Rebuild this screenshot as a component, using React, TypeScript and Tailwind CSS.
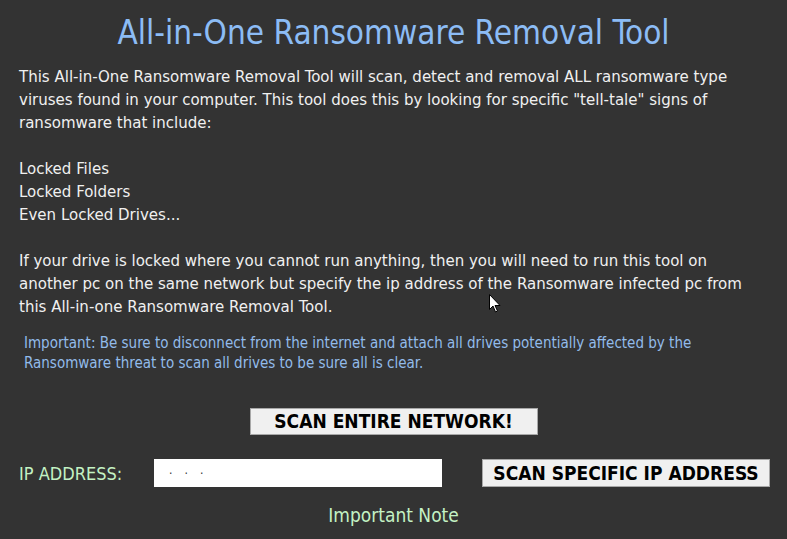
import React from "react";

const bodyLines = [
  "This All-in-One Ransomware Removal Tool will scan, detect and removal ALL ransomware type",
  'viruses found in your computer. This tool does this by looking for specific "tell-tale" signs of',
  "ransomware that include:",
  "",
  "Locked Files",
  "Locked Folders",
  "Even Locked Drives...",
  "",
  "If your drive is locked where you cannot run anything, then you will need to run this tool on",
  "another pc on the same network but specify the ip address of the Ransomware infected pc from",
  "this All-in-one Ransomware Removal Tool.",
];

function Cursor() {
  return (
    <svg className="absolute left-[489px] top-[294px]" width="13" height="20" viewBox="0 0 13 20">
      <path d="M0.5 0.5 L0.5 15.5 L4 12 L6.5 18 L8.5 17 L6 11.5 L11 11.5 Z" fill="#fff" stroke="#000" strokeWidth="1" />
    </svg>
  );
}

export default function App() {
  return (
    <div
      className="relative w-[787px] h-[539px] overflow-hidden bg-[#333333] px-[19px]"
      style={{ fontFamily: '"DejaVu Sans Condensed", "DejaVu Sans", sans-serif', fontStretch: "condensed" }}
    >
      {/* Title */}
      <h1 className="mt-[13px] text-center text-[33px] leading-[40px] text-[#8cbcf5]">
        All-in-One Ransomware Removal Tool
      </h1>

      {/* Description */}
      <div className="mt-[12px] text-[16.7px] leading-[23px] text-[#f0f0f0]">
        {bodyLines.map((l, i) => (
          <div key={i} className="h-[23px] whitespace-nowrap">
            {l}
          </div>
        ))}
      </div>

      {/* Note */}
      <div className="mt-[15px] pl-[5px] text-[15px] leading-[20px] text-[#92bbea]">
        <div className="whitespace-nowrap">
          Important: Be sure to disconnect from the internet and attach all drives potentially affected by the
        </div>
        <div className="whitespace-nowrap">Ransomware threat to scan all drives to be sure all is clear.</div>
      </div>

      {/* Scan all */}
      <div className="mt-[35px] flex justify-center">
        <button className="h-[27px] w-[288px] border border-[#a8a8a8] bg-[#f0f0f0] text-[19px] font-bold leading-none text-black">
          SCAN ENTIRE NETWORK!
        </button>
      </div>

      {/* IP row */}
      <div className="mt-[24px] flex h-[28px] items-center">
        <span className="w-[135px] shrink-0 text-[18px] text-[#c4f2c4]">IP ADDRESS:</span>
        <div className="flex h-[28px] w-[288px] shrink-0 items-start gap-[12px] bg-white pl-[15px] pt-[2px] text-[12px] text-[#333]">
          <span>.</span>
          <span>.</span>
          <span>.</span>
        </div>
        <button className="ml-[40px] h-[28px] w-[288px] shrink-0 border border-[#a8a8a8] bg-[#f0f0f0] text-[19px] font-bold leading-none text-black">
          SCAN SPECIFIC IP ADDRESS
        </button>
      </div>

      {/* Footer */}
      <div className="mt-[18px] text-center text-[19px] leading-[20px] text-[#c4f2c4]">Important Note</div>

      <Cursor />
    </div>
  );
}
